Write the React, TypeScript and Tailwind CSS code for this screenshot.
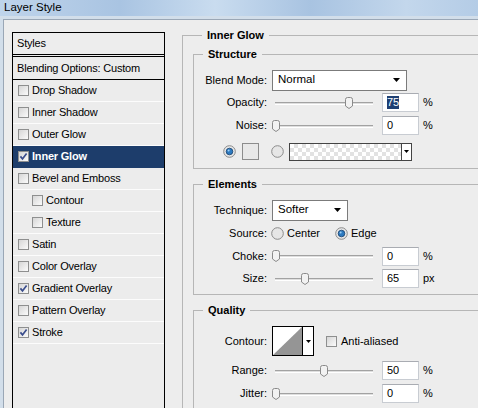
import React from "react";

const FONT = { fontFamily: '"Liberation Sans", Arial, sans-serif' };

function Check({ checked = false }: { checked?: boolean }) {
  return (
    <span className="flex h-[11px] w-[11px] shrink-0 items-center justify-center border border-[#8e8f8f] bg-[linear-gradient(135deg,#d6d6d6,#fbfbfb)]">
      {checked && (
        <svg width="9" height="9" viewBox="0 0 9 9">
          <path d="M1.4 4.4 L3.5 6.9 L7.6 1.6" fill="none" stroke="#3a4d8c" strokeWidth="1.7" />
        </svg>
      )}
    </span>
  );
}

function Radio({ on = false }: { on?: boolean }) {
  return (
    <svg width="13" height="13" viewBox="0 0 13 13" className="shrink-0">
      <circle cx="6.5" cy="6.5" r="5.8" fill="#e6e6e6" stroke="#8b8b8b" />
      {on && <circle cx="6.5" cy="6.5" r="3.3" fill="#2d7ac0" stroke="#173f6b" strokeWidth="0.8" />}
      {on && <circle cx="5.6" cy="5.6" r="1" fill="#9fd0f5" />}
    </svg>
  );
}

function Arrow() {
  return (
    <svg width="7" height="4" viewBox="0 0 7 4">
      <path d="M0 0 H7 L3.5 4 Z" fill="#000" />
    </svg>
  );
}

// thumb centre given in px from the track start
function Slider({ pos }: { pos: number }) {
  return (
    <div className="relative h-[14px] w-[106px] shrink-0">
      <div className="absolute left-[3px] top-[6px] h-[3px] w-[98px] border-t border-b border-t-[#a2a2a2] border-b-white bg-[#dedede]" />
      <svg
        width="8"
        height="12"
        viewBox="0 0 8 12"
        className="absolute top-[1px]"
        style={{ left: 3 + pos - 4 }}
      >
        <path
          d="M0.5 2.5 Q0.5 0.5 2.5 0.5 H5.5 Q7.5 0.5 7.5 2.5 V9 L4 11.5 L0.5 9 Z"
          fill="#f2f2f2"
          stroke="#8a8a8a"
        />
      </svg>
    </div>
  );
}

function Field({ value, selected = false }: { value: string; selected?: boolean }) {
  return (
    <div className="ml-[4px] flex h-[19px] w-[37px] shrink-0 items-center border border-[#c8ccd2] border-t-[#a9acb2] bg-white pl-[4px] text-[11px]">
      {selected ? <span className="bg-[#1e3f72] leading-[13px] text-white">{value}</span> : value}
    </div>
  );
}

function Row({ label, className, children }: { label: string; className: string; children: React.ReactNode }) {
  return (
    <div className={`flex items-center ${className}`}>
      <span className="w-[73px] shrink-0 text-right">{label}</span>
      <div className="ml-[5px] flex items-center">{children}</div>
    </div>
  );
}

function SliderRow({ label, pos, value, unit, className = "h-[23px]", selected = false }: {
  label: string; pos: number; value: string; unit: string; className?: string; selected?: boolean;
}) {
  return (
    <Row label={label} className={className}>
      <Slider pos={pos} />
      <Field value={value} selected={selected} />
      <span className="ml-[4px]">{unit}</span>
    </Row>
  );
}

function Group({ title, className, children }: { title: string; className: string; children: React.ReactNode }) {
  return (
    <fieldset className={`border border-[#b6b6b6] ${className}`}>
      <legend className="ml-[9px] px-[5px] text-[11px] font-bold leading-[12px]">{title}</legend>
      {children}
    </fieldset>
  );
}

const STYLES: { name: string; checked?: boolean; indent?: boolean; active?: boolean }[] = [
  { name: "Drop Shadow" },
  { name: "Inner Shadow" },
  { name: "Outer Glow" },
  { name: "Inner Glow", checked: true, active: true },
  { name: "Bevel and Emboss" },
  { name: "Contour", indent: true },
  { name: "Texture", indent: true },
  { name: "Satin" },
  { name: "Color Overlay" },
  { name: "Gradient Overlay", checked: true },
  { name: "Pattern Overlay" },
  { name: "Stroke", checked: true },
];

export default function App() {
  return (
    <div className="flex h-[408px] w-[478px] flex-col overflow-hidden text-[11px] text-black" style={FONT}>
      <div className="flex h-[16px] shrink-0 items-center bg-[linear-gradient(90deg,#bfd4eb,#a9c4e2_25%,#c9dcef_45%,#a8c3e1_65%,#c3d7ec_85%,#b4cce6)] pl-[4px] text-[11.5px]">
        Layer Style
      </div>
      <div className="flex flex-1 flex-col bg-[#d2deea] pl-[3px] pt-[3px]">
        <div className="flex flex-1 border-l border-t border-[#9aa7b6] bg-[#ededed]">
          {/* styles list */}
          <div className="ml-[8px] mt-[12px] flex w-[153px] shrink-0 flex-col border-l border-r border-t border-black tracking-[-0.2px]">
            <div className="flex h-[22px] items-center border-b border-black pl-[4px]">Styles</div>
            <div className="h-[1px]" />
            <div className="flex flex-1 flex-col border-t border-black bg-[#ececec]">
              <div className="flex h-[23px] items-center border-b border-black pl-[4px]">Blending Options: Custom</div>
              {STYLES.map((s) => (
                <div
                  key={s.name}
                  className={`flex h-[22px] items-center gap-[3px] border-b ${
                    s.active ? "border-[#1d3d6b] bg-[#1d3d6b] font-bold text-white" : "border-[#fcfcfc]"
                  } ${s.indent ? "pl-[19px]" : "pl-[5px]"}`}
                >
                  <Check checked={s.checked} />
                  <span>{s.name}</span>
                </div>
              ))}
            </div>
          </div>

          {/* settings */}
          <div className="ml-[17px] mt-[9px] w-[320px] shrink-0">
            <Group title="Inner Glow" className="h-[420px] w-[320px] pl-[10px]">
              <Group title="Structure" className="mt-[7px] w-[290px] pb-[2px]">
                <Row label="Blend Mode:" className="mt-[9px] h-[22px]">
                  <div className="flex h-[21px] w-[135px] items-center justify-between border border-[#7b7b7b] bg-white pl-[5px] pr-[6px] text-[11.5px]">
                    <span>Normal</span>
                    <Arrow />
                  </div>
                </Row>
                <SliderRow label="Opacity:" pos={73.5} value="75" unit="%" selected />
                <SliderRow label="Noise:" pos={1} value="0" unit="%" />
                <div className="flex h-[29px] items-center pl-[29px]">
                  <Radio on />
                  <div className="ml-[6px] h-[17px] w-[17px] border border-[#8c8c8c] bg-[#e8e8e8]" />
                  <div className="ml-[12px]">
                    <Radio />
                  </div>
                  <div className="ml-[5px] flex h-[18px] w-[123px] border border-[#444]">
                    <div className="flex-1 bg-[conic-gradient(#e2e2e2_25%,#ffffff_0_50%,#e2e2e2_0_75%,#ffffff_0)] bg-[length:8px_8px]" />
                    <div className="flex w-[10px] items-center justify-center border-l border-[#444] bg-white">
                      <svg width="5" height="3" viewBox="0 0 5 3">
                        <path d="M0 0 H5 L2.5 3 Z" fill="#000" />
                      </svg>
                    </div>
                  </div>
                </div>
              </Group>

              <Group title="Elements" className="mt-[9px] w-[290px] pb-[4px]">
                <Row label="Technique:" className="mt-[9px] h-[22px]">
                  <div className="flex h-[21px] w-[76px] items-center justify-between border border-[#7b7b7b] bg-white pl-[5px] pr-[6px] text-[11.5px]">
                    <span>Softer</span>
                    <Arrow />
                  </div>
                </Row>
                <div className="flex h-[24px] items-center">
                  <span className="w-[73px] shrink-0 text-right">Source:</span>
                  <div className="ml-[4px] flex items-center gap-[3px]">
                    <Radio />
                    <span>Center</span>
                  </div>
                  <div className="ml-[15px] flex items-center gap-[3px]">
                    <Radio on />
                    <span>Edge</span>
                  </div>
                </div>
                <SliderRow label="Choke:" pos={1} value="0" unit="%" className="h-[22px]" />
                <SliderRow label="Size:" pos={30} value="65" unit="px" />
              </Group>

              <Group title="Quality" className="mt-[9px] w-[290px] pb-[10px]">
                <Row label="Contour:" className="mt-[10px] h-[30px]">
                  <div className="flex h-[30px] w-[42px] border border-black bg-white">
                    <svg width="29" height="28" viewBox="0 0 29 28" className="block">
                      <polygon points="0,28 29,0 29,28" fill="#959595" />
                    </svg>
                    <div className="flex flex-1 items-center justify-center border-l border-black">
                      <svg width="5" height="3" viewBox="0 0 5 3">
                        <path d="M0 0 H5 L2.5 3 Z" fill="#000" />
                      </svg>
                    </div>
                  </div>
                  <div className="ml-[12px] flex items-center gap-[4px]">
                    <Check />
                    <span>Anti-aliased</span>
                  </div>
                </Row>
                <SliderRow label="Range:" pos={49} value="50" unit="%" className="mt-[3px] h-[23px]" />
                <SliderRow label="Jitter:" pos={1} value="0" unit="%" />
              </Group>
            </Group>
          </div>
        </div>
      </div>
    </div>
  );
}
